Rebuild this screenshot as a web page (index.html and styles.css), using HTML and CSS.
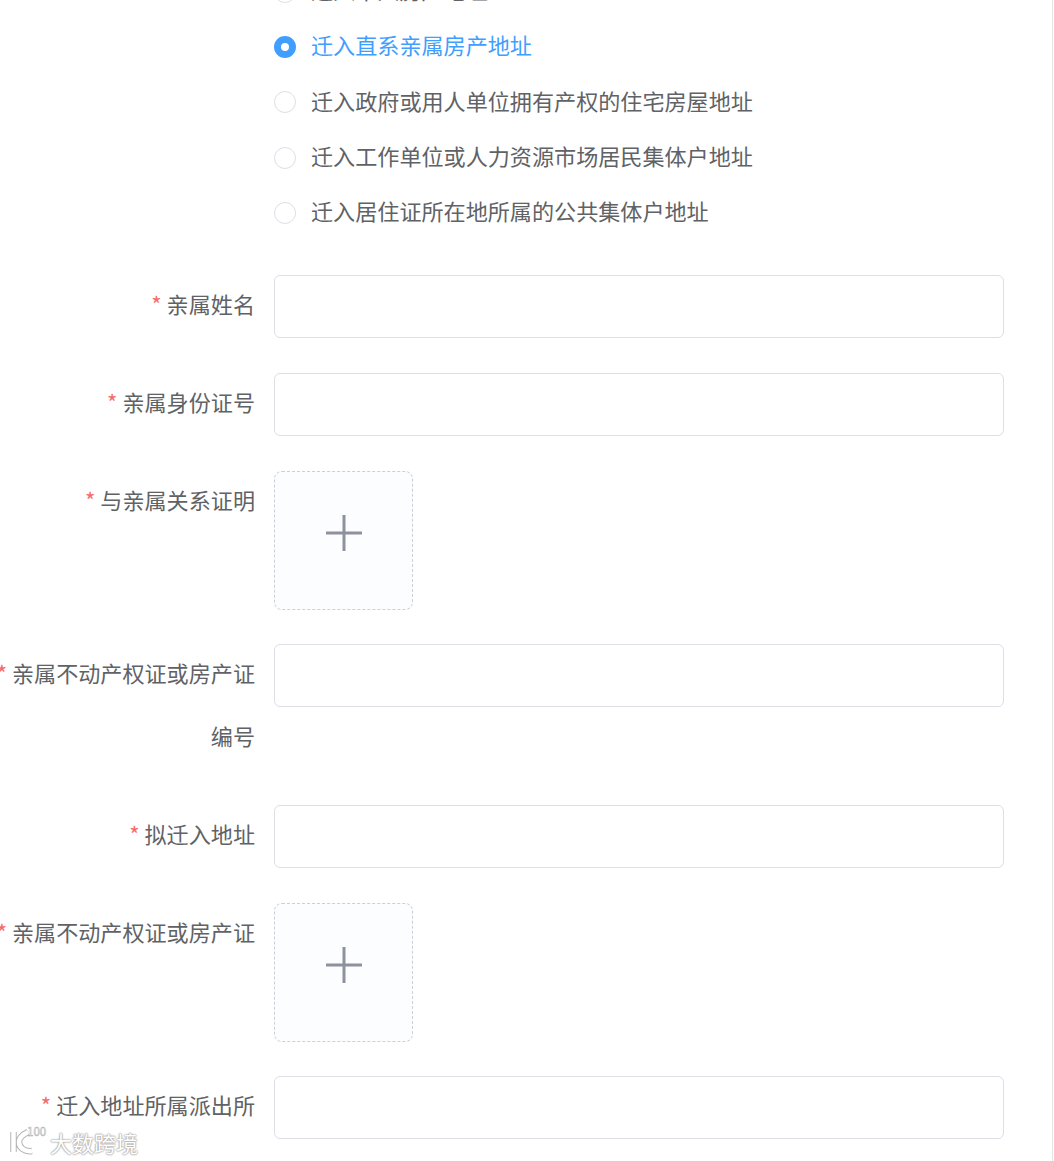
FILE: index.html
```html
<!DOCTYPE html>
<html lang="zh-CN">
<head>
  <meta charset="UTF-8" />
  <meta name="viewport" content="width=device-width, initial-scale=1.0"/>
  <title>迁入申请</title>
  <link rel="stylesheet" href="styles.css">
</head>
<body>

  <div class="page">
    <form class="form">

      <!-- 迁入类型 -->
      <div class="radio-group">
        <label class="radio"><span class="radio-dot"></span><span class="radio-text">迁入本人房产地址</span></label>
        <label class="radio is-checked"><span class="radio-dot"></span><span class="radio-text">迁入直系亲属房产地址</span></label>
        <label class="radio"><span class="radio-dot"></span><span class="radio-text">迁入政府或用人单位拥有产权的住宅房屋地址</span></label>
        <label class="radio"><span class="radio-dot"></span><span class="radio-text">迁入工作单位或人力资源市场居民集体户地址</span></label>
        <label class="radio"><span class="radio-dot"></span><span class="radio-text">迁入居住证所在地所属的公共集体户地址</span></label>
      </div>

      <div class="form-item">
        <div class="form-label"><span class="req">*</span>亲属姓名</div>
        <div class="form-field"><input class="input" type="text"></div>
      </div>

      <div class="form-item">
        <div class="form-label"><span class="req">*</span>亲属身份证号</div>
        <div class="form-field"><input class="input" type="text"></div>
      </div>

      <div class="form-item">
        <div class="form-label"><span class="req">*</span>与亲属关系证明</div>
        <div class="form-field">
          <div class="upload">
            <svg class="upload-icon" viewBox="0 0 36 36"><path d="M18 0V36M0 18H36"/></svg>
          </div>
        </div>
      </div>

      <div class="form-item">
        <div class="form-label"><span class="req">*</span>亲属不动产权证或房产证编号</div>
        <div class="form-field"><input class="input" type="text"></div>
      </div>

      <div class="form-item">
        <div class="form-label"><span class="req">*</span>拟迁入地址</div>
        <div class="form-field"><input class="input" type="text"></div>
      </div>

      <div class="form-item">
        <div class="form-label"><span class="req">*</span>亲属不动产权证或房产证</div>
        <div class="form-field">
          <div class="upload">
            <svg class="upload-icon" viewBox="0 0 36 36"><path d="M18 0V36M0 18H36"/></svg>
          </div>
        </div>
      </div>

      <div class="form-item">
        <div class="form-label"><span class="req">*</span>迁入地址所属派出所</div>
        <div class="form-field"><input class="input" type="text"></div>
      </div>

    </form>

    <!-- 水印 -->
    <div class="watermark">
      <svg class="watermark-logo" viewBox="0 0 40 32">
        <path class="wm-edge" d="M4.5 8V28M19 8C13 11 10 15 10 18C10 24 16 28 23 27"/>
        <path class="wm-fill" d="M4.5 8V28M19 8C13 11 10 15 10 18C10 24 16 28 23 27"/>
        <text class="wm-num" x="18" y="12">100</text>
      </svg>
      <span class="watermark-text">大数跨境</span>
    </div>
  </div>

</body>
</html>
```

FILE: styles.css
```css
html, body {
  margin: 0;
  padding: 0;
  background-color: #fff;
}

body {
  font-family: "Noto Sans CJK SC", "Liberation Sans", sans-serif;
  color: #606266;
}

.page {
  position: relative;
  width: 1053px;
  height: 1161px;
  overflow: hidden;
  border-right: 1px solid #e4e4e4;
  box-sizing: border-box;
}

.form {
  margin-top: -36px;
  padding-right: 48px;
}

.radio-group {
  display: flex;
  flex-direction: column;
  padding-left: 274px;
  margin-bottom: 35px;
}

.radio {
  display: flex;
  align-items: center;
  height: 55.3px;
  font-size: 22.1px;
  white-space: nowrap;
}

.radio-dot {
  width: 22px;
  height: 22px;
  box-sizing: border-box;
  border: 1px solid #dcdfe6;
  border-radius: 50%;
  margin-right: 15px;
  background-color: #fff;
}

.radio-text {
  margin-bottom: 5px;
}

.radio.is-checked {
  color: #409eff;
}

.radio.is-checked .radio-dot {
  border: 7.5px solid #409eff;
}

.form-item {
  display: flex;
  margin-bottom: 35px;
}

.form-label {
  box-sizing: border-box;
  flex: none;
  width: 284px;
  margin: -3px 0 3px -10px;
  padding-right: 19px;
  font-size: 22.1px;
  line-height: 63px;
  text-align: right;
}

.req {
  color: #f56c6c;
  margin-right: 5px;
}

.form-field {
  flex: 1;
}

.input {
  display: block;
  box-sizing: border-box;
  width: 100%;
  height: 63px;
  border: 1px solid #dcdfe6;
  border-radius: 6px;
  background-color: #fff;
  outline: none;
}

.upload {
  box-sizing: border-box;
  display: flex;
  align-items: center;
  justify-content: center;
  width: 139px;
  height: 139px;
  margin-bottom: -1px;
  padding-bottom: 15px;
  border: 1px dashed #c8d0da;
  border-radius: 8px;
  background-color: #fbfdff;
}

.upload-icon {
  width: 36px;
  height: 36px;
}

.upload-icon path {
  fill: none;
  stroke: #8c939d;
  stroke-width: 3;
}

.watermark {
  position: absolute;
  left: 9px;
  bottom: 5px;
  display: flex;
  align-items: flex-end;
  gap: 1px;
}

.watermark-logo {
  width: 40px;
  height: 32px;
}

.wm-edge {
  fill: none;
  stroke: #b5b5b5;
  stroke-width: 6.5;
}

.wm-fill {
  fill: none;
  stroke: #fff;
  stroke-width: 4.5;
}

.wm-num {
  font-size: 11.5px;
  fill: #fff;
  stroke: #aaa;
  stroke-width: 0.5;
}

.watermark-text {
  font-size: 22px;
  line-height: 28px;
  color: #fff;
  text-shadow: 0 0 1px #999, 0 0 2px #aaa, 0 0 2px #aaa;
}
```
